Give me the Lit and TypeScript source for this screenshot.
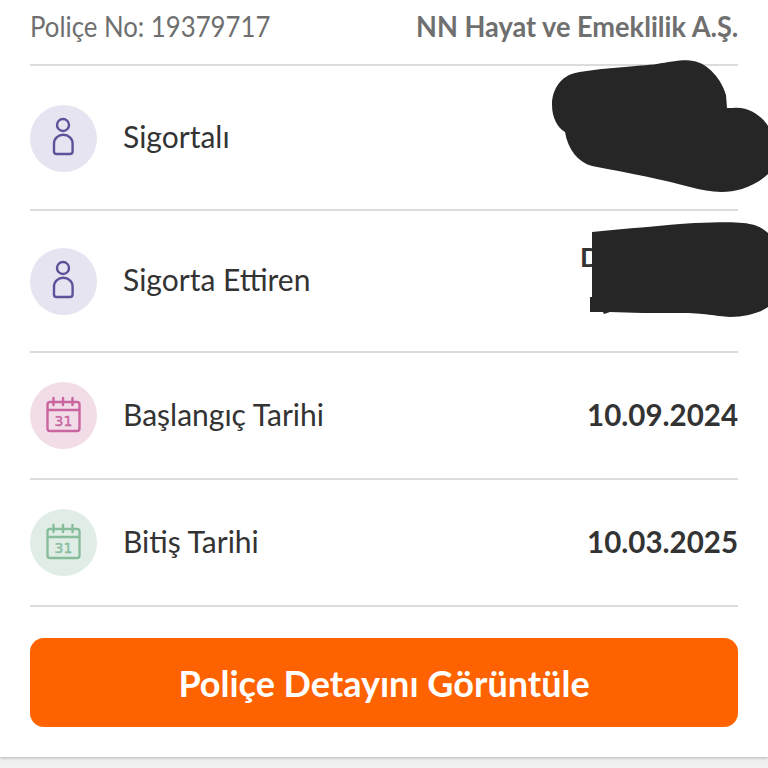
import { LitElement, html, css, svg } from "lit";
import { customElement } from "lit/decorators.js";

const person = html`<svg class="ico" viewBox="0 0 66 66" fill="none" stroke-width="2.4">
  <circle cx="33" cy="20" r="6"></circle>
  <path d="M26.5 49C25 49 24 48 24 46.5V38.5C24 33.5 28 29.8 33.3 29.8S42.6 33.5 42.6 38.5V46.5C42.6 48 41.6 49 40 49Z" stroke-linejoin="round"></path>
</svg>`;

const calendar = html`<svg class="ico" viewBox="0 0 66 66" fill="none" stroke-width="2.4">
  <rect x="17.5" y="20" width="32" height="29" rx="2.5"></rect>
  <path d="M17.5 28H49.5"></path>
  <path d="M23.5 16V23M33 16V23M42.5 16V23" stroke-linecap="round"></path>
  ${svg`<text class="num" x="33.5" y="44" text-anchor="middle">31</text>`}
</svg>`;

@customElement("app-root")
export class AppRoot extends LitElement {
  static styles = css`
    :host {
      display: block;
      position: relative;
      height: 768px;
      overflow: hidden;
      background: #f0f0f0;
      font-family: Lato, "Noto Sans", sans-serif;
      color: #333333;
    }
    .card {
      height: 757px;
      box-sizing: border-box;
      background: #ffffff;
      padding: 0 30px;
      box-shadow: 0 1px 3px rgba(0, 0, 0, 0.25);
      display: flex;
      flex-direction: column;
    }
    .head {
      flex: none;
      height: 66px;
      padding-bottom: 13px;
      box-sizing: border-box;
      display: flex;
      justify-content: space-between;
      align-items: center;
      border-bottom: 2px solid #dcdcdc;
      color: #6f6f6f;
      font-size: 28px;
      white-space: nowrap;
    }
    .head .no {
      font-weight: 400;
      transform: scaleX(0.92);
      transform-origin: left center;
    }
    .head .co {
      font-weight: 700;
      transform: scaleX(0.97);
      transform-origin: right center;
    }
    .row {
      display: flex;
      align-items: center;
      justify-content: space-between;
      border-bottom: 2px solid #dcdcdc;
      box-sizing: border-box;
      flex: none;
    }
    .h1 { height: 145px; padding-top: 1px; }
    .h2 { height: 142px; }
    .h3 { height: 127px; }
    .left { display: flex; align-items: center; gap: 26px; font-size: 30px; }
    .label { padding-bottom: 4px; }
    .circle {
      width: 67px;
      height: 67px;
      border-radius: 50%;
      flex: none;
    }
    .ico { width: 66px; height: 66px; display: block; }
    .purple { background: #e5e4f0; }
    .purple .ico { stroke: #5b5299; }
    .pink { background: #f1dce8; }
    .pink .ico { stroke: #c9659f; }
    .pink .num { fill: #c9659f; }
    .green { background: #e0ede6; }
    .green .ico { stroke: #88bd9c; }
    .green .num { fill: #88bd9c; }
    .num { font: 400 14px "DejaVu Sans", sans-serif; stroke-width: 0.4; }
    .val { font-weight: 700; font-size: 29.5px; color: #333333; padding-bottom: 2px; }
    .partial {
      width: 158px;
      padding-bottom: 49px;
      font-size: 27px;
    }
    .btn {
      margin-top: 31px;
      height: 89px;
      border: none;
      border-radius: 14px;
      background: #ff6200;
      color: #ffffff;
      font: 700 36px Lato, "Noto Sans", sans-serif;
      flex: none;
      padding: 0;
    }
    .mask {
      position: absolute;
      left: 530px;
      top: 50px;
      width: 238px;
      height: 290px;
      pointer-events: none;
    }
    .mask path { fill: #262626; }
  `;

  render() {
    return html`
      <div class="card">
        <div class="head">
          <span class="no">Poliçe No: 19379717</span>
          <span class="co">NN Hayat ve Emeklilik A.Ş.</span>
        </div>
        <div class="row h1">
          <div class="left"><div class="circle purple">${person}</div><span class="label">Sigortalı</span></div>
        </div>
        <div class="row h2">
          <div class="left"><div class="circle purple">${person}</div><span class="label">Sigorta Ettiren</span></div>
          <div class="val partial">D</div>
        </div>
        <div class="row h3">
          <div class="left"><div class="circle pink">${calendar}</div><span class="label">Başlangıç Tarihi</span></div>
          <div class="val">10.09.2024</div>
        </div>
        <div class="row h3">
          <div class="left"><div class="circle green">${calendar}</div><span class="label">Bitiş Tarihi</span></div>
          <div class="val">10.03.2025</div>
        </div>
        <button class="btn">Poliçe Detayını Görüntüle</button>
      </div>
      <svg class="mask" viewBox="0 0 238 290">
        <path d="M22 55C22 38 32 26 45 23C70 18 110 16 127 14C140 12 155 9 163 11C178 13 192 30 196 45L197 58L203 58C218 56 232 66 238 76V124C232 130 222 136 212 139C195 144 178 142 160 137C135 130 100 123 62 116C48 112 38 100 35 82C28 78 22 68 22 55Z"></path>
        <path d="M62 182C95 179 135 175 165 173C190 172 205 172 213 173C225 174 233 178 238 183V257C230 263 215 267 200 267C185 266 175 263 150 263C125 263 100 263 80 262L74 264L73 262H60V247H62Z"></path>
      </svg>
    `;
  }
}
